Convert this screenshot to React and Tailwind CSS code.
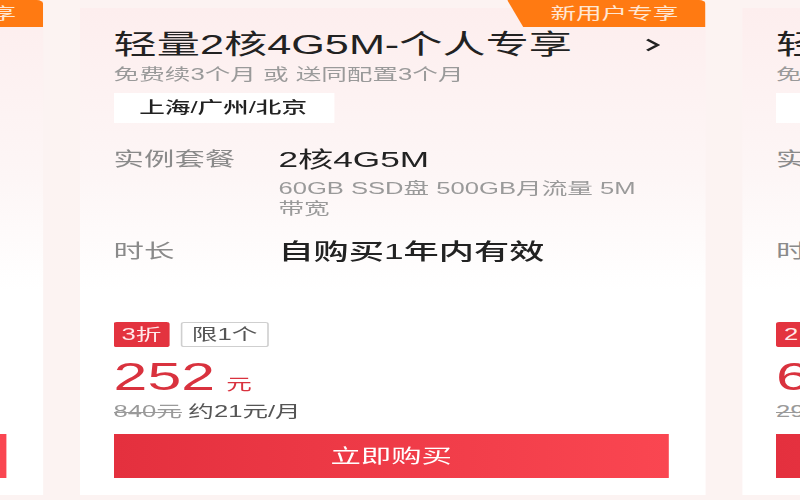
const FONT = { fontFamily: '"Liberation Sans", "Noto Sans CJK SC", sans-serif' };

const plans = [
  {
    title: '轻量2核2G4M-个人专享',
    gift: '免费续3个月 或 送同配置3个月',
    region: '上海/广州/北京',
    spec: '2核2G4M',
    detail: '50GB SSD盘 300GB月流量 4M',
    period: '自购买1年内有效',
    discount: '3折',
    price: '112',
    origin: '374元',
    monthly: '约9元/月',
    badge: true,
  },
  {
    title: '轻量2核4G5M-个人专享',
    gift: '免费续3个月 或 送同配置3个月',
    region: '上海/广州/北京',
    spec: '2核4G5M',
    detail: '60GB SSD盘 500GB月流量 5M',
    period: '自购买1年内有效',
    discount: '3折',
    price: '252',
    origin: '840元',
    monthly: '约21元/月',
    badge: true,
  },
  {
    title: '轻量4核8G8M-个人专享',
    gift: '免费续3个月 或 送同配置3个月',
    region: '上海/广州/北京',
    spec: '4核8G8M',
    detail: '80GB SSD盘 900GB月流量 8M',
    period: '自购买1年内有效',
    discount: '2.2折',
    price: '630',
    origin: '2940元',
    monthly: '约53元/月',
    badge: false,
  },
];

const PlanCard = ({ plan }) => {
  return (
    <div className="relative w-[391px] h-[487px] shrink-0 bg-[linear-gradient(180deg,#fdeeee_0%,#fdf6f6_35%,#ffffff_58%)] pt-[21px] pl-[21px] pr-[23px] pb-[17px] flex flex-col">
      {plan.badge && (
        <div className="absolute top-[-8px] right-0 w-[124px] h-[27px] bg-[#ff7a12] rounded-tr-[4px] [clip-path:polygon(0_0,100%_0,100%_100%,10px_100%)] flex items-center justify-end pr-[17px]">
          <span className="text-[16px] leading-none text-[#ffe6d2]">新用户专享</span>
        </div>
      )}

      {/* Title */}
      <div className="flex items-center justify-between">
        <h3 className="text-[27px] leading-[32px] text-[#222] whitespace-nowrap">{plan.title}</h3>
        <svg width="10" height="14" viewBox="0 0 10 14" className="mr-[5px] shrink-0">
          <path d="M1.5 1.5 L8 7 L1.5 12.5" fill="none" stroke="#222" strokeWidth="2.2" />
        </svg>
      </div>
      <p className="mt-[4px] text-[16px] leading-[20px] text-[#9a9a9a] whitespace-nowrap">{plan.gift}</p>

      <div className="mt-[8px] w-[138px] h-[30px] bg-white flex items-center pl-[16px]">
        <span className="text-[16px] leading-none text-[#222] font-medium whitespace-nowrap">{plan.region}</span>
      </div>

      {/* Specs */}
      <div className="mt-[25px] flex">
        <span className="w-[103px] shrink-0 text-[19px] leading-[24px] text-[#8a8a8a]">实例套餐</span>
        <div className="flex flex-col max-w-[232px]">
          <span className="text-[22px] leading-[24px] text-[#222]">{plan.spec}</span>
          <p className="mt-[7px] text-[16px] leading-[20px] text-[#9a9a9a]">{plan.detail}</p>
          <p className="text-[16px] leading-[20px] text-[#9a9a9a]">带宽</p>
        </div>
      </div>
      <div className="mt-[21px] flex">
        <span className="w-[103px] shrink-0 text-[19px] leading-[24px] text-[#8a8a8a]">时长</span>
        <span className="text-[22px] leading-[24px] text-[#222] font-medium whitespace-nowrap">{plan.period}</span>
      </div>

      {/* Price */}
      <div className="mt-auto flex gap-[7px]">
        <span className="h-[25px] px-[5px] rounded-[2px] bg-[#e3333f] text-[#ffe9ea] text-[16px] leading-[25px]">{plan.discount}</span>
        <span className="h-[25px] px-[6px] rounded-[2px] border border-[#cfcfcf] text-[#555] text-[16px] leading-[23px]">限1个</span>
      </div>
      <div className="mt-[12px] flex items-baseline gap-[7px]">
        <span className="text-[38px] leading-[37px] text-[#d9323e]">{plan.price}</span>
        <span className="text-[16px] leading-none text-[#d9323e]">元</span>
      </div>
      <div className="mt-[6px] flex gap-[4px] text-[16px] leading-[20px] whitespace-nowrap">
        <span className="text-[#9a9a9a] line-through">{plan.origin}</span>
        <span className="text-[#555]">{plan.monthly}</span>
      </div>
      <button className="mt-[12px] h-[44px] w-full bg-[linear-gradient(90deg,#e4303e,#fa4651)] text-white text-[19px] leading-none">
        立即购买
      </button>
    </div>
  );
};

const App = () => {
  return (
    <div className="w-[800px] h-[500px] overflow-hidden bg-[#fcf3f2]" style={FONT}>
      <div className="w-[500px] origin-top-left scale-x-[1.6] flex gap-[23px] pt-[8px]">
        <div className="ml-[-364px] flex gap-[23px]">
          {plans.map((p) => (
            <PlanCard key={p.title} plan={p} />
          ))}
        </div>
      </div>
    </div>
  );
};

export default App;
